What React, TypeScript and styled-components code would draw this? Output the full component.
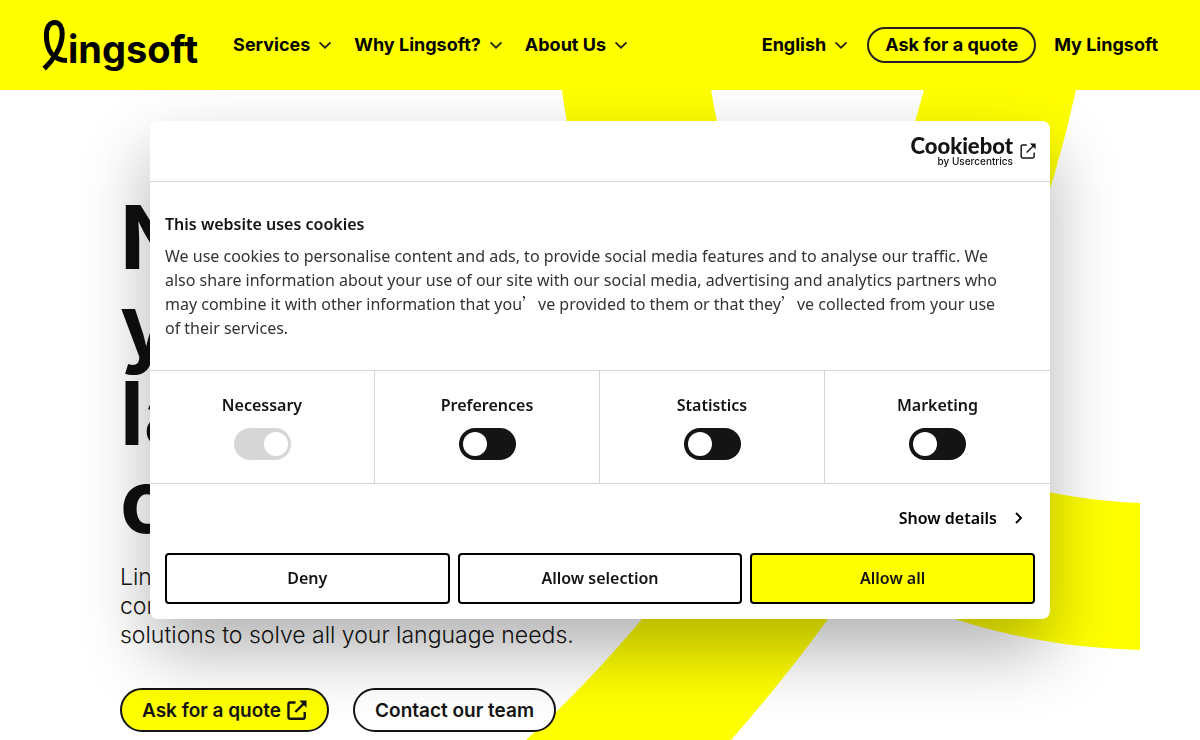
import React from "react";
import styled, { createGlobalStyle } from "styled-components";

const ink = "#141414";
const yellow = "#ffff00";
const line = "#d6d6d6";

const GlobalStyle = createGlobalStyle`
  *, *::before, *::after { box-sizing: border-box; }
  body {
    margin: 0;
    background: #fff;
    color: ${ink};
    font-family: Inter, "Liberation Sans", sans-serif;
  }
  button, input { font: inherit; color: inherit; }
  a { color: inherit; text-decoration: none; }
`;

const Page = styled.div`
  height: 100vh;
  display: flex;
  flex-direction: column;
  overflow: hidden;
`;

const Header = styled.header`
  flex: none;
  height: 90px;
  padding: 0 42px;
  display: flex;
  align-items: center;
  justify-content: space-between;
  background: ${yellow};
  color: #000;
`;

const HeaderGroup = styled.div`
  display: flex;
  align-items: center;
  gap: 35px;
`;

const Logo = styled.a`
  display: flex;
  align-items: center;
`;

const LogoLoop = styled.svg`
  width: 26px;
  height: 52px;
`;

const LogoText = styled.span`
  padding-top: 8px;
  font-weight: 700;
  font-size: 38px;
  line-height: 48px;
`;

const Nav = styled.nav<{ $gap: number }>`
  display: flex;
  align-items: center;
  gap: ${(p) => p.$gap}px;
  font-size: 18px;
  font-weight: 700;
  line-height: 24px;
`;

const MenuButton = styled.button`
  display: flex;
  align-items: center;
  gap: 7px;
  padding: 0;
  border: 0;
  background: none;
  white-space: nowrap;
  cursor: pointer;
`;

const NavLink = styled.a`
  white-space: nowrap;
`;

const HeaderPill = styled.a`
  height: 36px;
  padding: 0 16px;
  display: flex;
  align-items: center;
  border: 2px solid #222;
  border-radius: 18px;
  white-space: nowrap;
`;

const Hero = styled.main`
  position: relative;
  flex: 1;
  padding: 103px 120px 0;
`;

const Artwork = styled.svg`
  position: absolute;
  top: 0;
  right: 60px;
  width: 620px;
  height: 650px;
`;

const HeroContent = styled.div`
  position: relative;
`;

const HeroTitle = styled.h1`
  margin: 0;
  max-width: 480px;
  font-size: 88px;
  line-height: 88px;
  font-weight: 700;
  color: #0f0f0f;
`;

const HeroText = styled.p`
  margin: 18px 0 0;
  max-width: 480px;
  font-size: 23px;
  line-height: 29px;
  font-weight: 300;
`;

const HeroActions = styled.div`
  margin-top: 38px;
  display: flex;
  gap: 24px;
`;

const HeroPill = styled.a<{ $primary?: boolean }>`
  height: 44px;
  padding: 0 20px;
  display: flex;
  align-items: center;
  gap: 6px;
  border: 2px solid ${ink};
  border-radius: 22px;
  background: ${(p) => (p.$primary ? yellow : "#fff")};
  font-size: 19px;
  font-weight: 600;
  white-space: nowrap;
`;

const Overlay = styled.div`
  position: fixed;
  inset: 0;
  display: grid;
  place-items: center;
`;

const Dialog = styled.section`
  width: 75%;
  min-width: 720px;
  max-width: 900px;
  border-radius: 8px;
  background: #fff;
  box-shadow: 0 32px 68px rgba(0, 0, 0, 0.3);
  font-family: "Noto Sans", "Open Sans", sans-serif;
  font-size: 16px;
  line-height: 24px;
`;

const DialogHeader = styled.div`
  height: 61px;
  padding: 0 14px;
  display: flex;
  align-items: center;
  justify-content: flex-end;
  border-bottom: 1px solid ${line};
`;

const Brand = styled.a`
  display: flex;
  align-items: center;
  gap: 7px;
`;

const BrandName = styled.span`
  display: flex;
  flex-direction: column;
  align-items: flex-end;
`;

const BrandTitle = styled.span`
  font-family: Lato, sans-serif;
  font-weight: 900;
  font-size: 22px;
  line-height: 20px;
`;

const BrandOwner = styled.span`
  font-family: Inter, sans-serif;
  font-size: 10px;
  line-height: 10px;
  font-weight: 500;
`;

const DialogBody = styled.div`
  padding: 30px 15px;
`;

const DialogTitle = styled.h2`
  margin: 0 0 8px;
  font-size: 16px;
  line-height: 24px;
  font-weight: 600;
`;

const DialogText = styled.p`
  margin: 0;
  max-width: 845px;
  color: #333;
`;

const WideMark = styled.span`
  font-family: "Noto Sans CJK SC", sans-serif;
  line-height: 1;
`;

const Categories = styled.div`
  display: grid;
  grid-template-columns: repeat(4, 1fr);
  border-top: 1px solid ${line};
  border-bottom: 1px solid ${line};
`;

const Category = styled.label`
  padding: 22px 8px 23px;
  display: flex;
  flex-direction: column;
  align-items: center;
  gap: 11px;
  font-weight: 600;
  &:not(:last-child) { border-right: 1px solid ${line}; }
`;

const Switch = styled.input`
  appearance: none;
  width: 57px;
  height: 32px;
  margin: 0;
  padding: 4px;
  display: flex;
  border-radius: 16px;
  background: ${ink};
  cursor: pointer;
  &::before {
    content: "";
    width: 24px;
    height: 24px;
    border-radius: 50%;
    background: #fff;
  }
  &:checked { justify-content: flex-end; padding-right: 3px; }
  &:disabled { background: #d6d6d6; cursor: default; }
`;

const DetailsRow = styled.div`
  height: 69px;
  padding: 0 25px 2px;
  display: flex;
  align-items: center;
  justify-content: flex-end;
`;

const DetailsLink = styled.a`
  display: flex;
  align-items: center;
  gap: 16px;
  font-weight: 600;
  color: #000;
`;

const DialogActions = styled.div`
  padding: 0 15px 15px;
  display: flex;
  gap: 8px;
`;

const DialogButton = styled.button<{ $primary?: boolean }>`
  flex: 1;
  height: 51px;
  padding: 0 8px 2px;
  border: 2px solid #000;
  border-radius: 4px;
  background: ${(p) => (p.$primary ? yellow : "#fff")};
  color: ${ink};
  font-weight: 600;
  cursor: pointer;
`;

const Chevron = () => (
  <svg width="16" height="16" viewBox="0 0 16 16" fill="none" stroke="#222" strokeWidth="1.7" aria-hidden="true">
    <path d="M2.5 5.3 8 10.7 13.5 5.3" />
  </svg>
);

const ExternalIcon = ({ size, weight }: { size: number; weight: number }) => (
  <svg width={size} height={size} viewBox="0 0 20 20" fill="none" stroke={ink} strokeWidth={weight} aria-hidden="true">
    <path d="M8.5 2.5H3.2Q1.5 2.5 1.5 4.2V17Q1.5 18.7 3.2 18.7H16Q17.7 18.7 17.7 17V12" />
    <path d="M8.3 12 17 3.3" />
    <path d="M12.3.5H19.5V7.7Z" fill={ink} stroke="none" />
  </svg>
);

const categories = [
  { name: "Necessary", locked: true },
  { name: "Preferences" },
  { name: "Statistics" },
  { name: "Marketing" },
];

export default function App() {
  return (
    <>
      <GlobalStyle />
      <Page>
        <Header>
          <HeaderGroup>
            <Logo href="#" aria-label="Lingsoft">
              <LogoLoop viewBox="0 0 26 52" fill="none" stroke="#000" strokeWidth="5" aria-hidden="true">
                <path d="M2.2 49.6C11 41.5 20.2 28 20.2 15 20.2 8 17.5 3.5 12.7 3.5 7.7 3.5 4.4 8.5 4.4 16 4.4 31 11 41.4 25 41.6" />
              </LogoLoop>
              <LogoText>ingsoft</LogoText>
            </Logo>
            <Nav $gap={21}>
              <MenuButton>Services <Chevron /></MenuButton>
              <MenuButton>Why Lingsoft? <Chevron /></MenuButton>
              <MenuButton>About Us <Chevron /></MenuButton>
            </Nav>
          </HeaderGroup>
          <Nav $gap={18}>
            <MenuButton>English <Chevron /></MenuButton>
            <HeaderPill href="#">Ask for a quote</HeaderPill>
            <NavLink href="#">My Lingsoft</NavLink>
          </Nav>
        </Header>

        <Hero>
          <Artwork viewBox="520 90 620 650" fill={yellow} aria-hidden="true">
            <path d="M562 90H711C752 330 880 492 1140 503V650C780 640 600 380 562 90Z" />
            <path d="M924 90H1076Q1016 365 828 619 786 677 731 740H526Q584 688 642 619 850 370 924 90Z" />
          </Artwork>
          <HeroContent>
            <HeroTitle>
              No matter<br />your<br />language<br />challenge
            </HeroTitle>
            <HeroText>
              Lingsoft offers services and<br />
              comprehensive language<br />
              solutions to solve all your language needs.
            </HeroText>
            <HeroActions>
              <HeroPill href="#" $primary>
                Ask for a quote <ExternalIcon size={20} weight={2.4} />
              </HeroPill>
              <HeroPill href="#">Contact our team</HeroPill>
            </HeroActions>
          </HeroContent>
        </Hero>
      </Page>

      <Overlay>
        <Dialog role="dialog" aria-labelledby="cookie-title">
          <DialogHeader>
            <Brand href="#">
              <BrandName>
                <BrandTitle>Cookiebot</BrandTitle>
                <BrandOwner>by Usercentrics</BrandOwner>
              </BrandName>
              <ExternalIcon size={16} weight={1.8} />
            </Brand>
          </DialogHeader>
          <DialogBody>
            <DialogTitle id="cookie-title">This website uses cookies</DialogTitle>
            <DialogText>
              We use cookies to personalise content and ads, to provide social media features and to
              analyse our traffic. We also share information about your use of our site with our social
              media, advertising and analytics partners who may combine it with other information that
              you<WideMark lang="zh-CN">’</WideMark>ve provided to them or that
              they<WideMark lang="zh-CN">’</WideMark>ve collected from your use of their services.
            </DialogText>
          </DialogBody>
          <Categories>
            {categories.map((c) => (
              <Category key={c.name}>
                {c.name}
                <Switch type="checkbox" defaultChecked={c.locked} disabled={c.locked} />
              </Category>
            ))}
          </Categories>
          <DetailsRow>
            <DetailsLink href="#">
              Show details
              <svg width="12" height="12" viewBox="0 0 12 12" fill="none" stroke="#000" strokeWidth="1.9" aria-hidden="true">
                <path d="M3 1 8 6 3 11" />
              </svg>
            </DetailsLink>
          </DetailsRow>
          <DialogActions>
            <DialogButton>Deny</DialogButton>
            <DialogButton>Allow selection</DialogButton>
            <DialogButton $primary>Allow all</DialogButton>
          </DialogActions>
        </Dialog>
      </Overlay>
    </>
  );
}
